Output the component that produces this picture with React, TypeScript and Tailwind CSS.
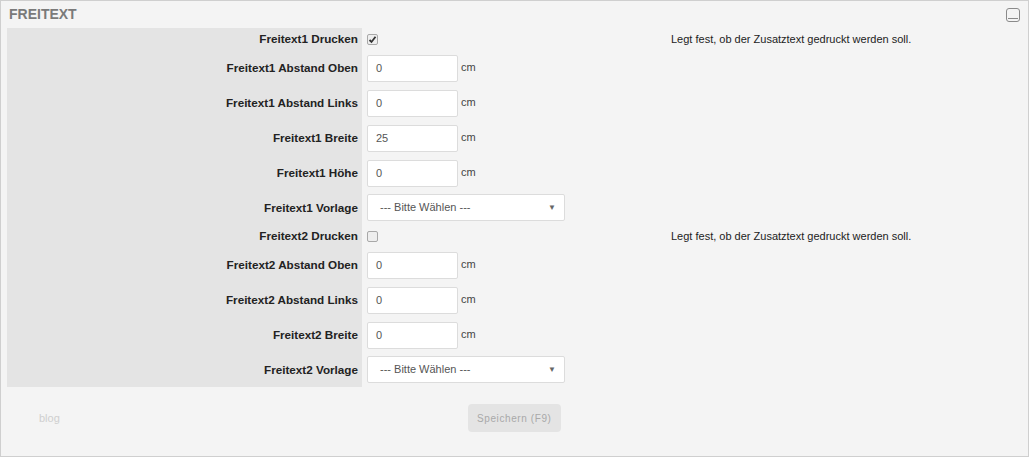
import React from 'react';

type Row =
  | { kind: 'check'; label: string; checked: boolean }
  | { kind: 'input'; label: string; value: string }
  | { kind: 'select'; label: string };

const rows: Row[] = [
  { kind: 'check', label: 'Freitext1 Drucken', checked: true },
  { kind: 'input', label: 'Freitext1 Abstand Oben', value: '0' },
  { kind: 'input', label: 'Freitext1 Abstand Links', value: '0' },
  { kind: 'input', label: 'Freitext1 Breite', value: '25' },
  { kind: 'input', label: 'Freitext1 Höhe', value: '0' },
  { kind: 'select', label: 'Freitext1 Vorlage' },
  { kind: 'check', label: 'Freitext2 Drucken', checked: false },
  { kind: 'input', label: 'Freitext2 Abstand Oben', value: '0' },
  { kind: 'input', label: 'Freitext2 Abstand Links', value: '0' },
  { kind: 'input', label: 'Freitext2 Breite', value: '0' },
  { kind: 'select', label: 'Freitext2 Vorlage' },
];

const Check = ({ checked }: { checked: boolean }) => (
  <span className="w-[11px] h-[11px] border border-[#a8a8a8] rounded-[2px] bg-[#eee] flex items-center justify-center">
    {checked && (
      <svg width="9" height="9" viewBox="0 0 9 9">
        <path d="M1.5 5 L3.5 7 L7.5 1.8" stroke="#333" strokeWidth="1.8" fill="none" />
      </svg>
    )}
  </span>
);

const App = () => {
  return (
    <div className="w-[1029px] h-[457px] bg-[#f4f4f4] border border-[#cfcfcf] font-['Liberation_Sans',Arial,sans-serif] text-[11px] text-[#333] flex flex-col">
      {/* Header */}
      <div className="h-[27px] flex items-center justify-between pl-[8px] pr-[8px]">
        <span className="text-[14px] font-bold text-[#7a7a7a]">FREITEXT</span>
        <span className="w-[14px] h-[14px] border border-[#8a8a8a] rounded-[3px] flex flex-col justify-end pb-[2px] px-[1px]">
          <span className="h-[1px] bg-[#8a8a8a]" />
        </span>
      </div>

      {/* Form */}
      <div className="pl-[6px]">
        {rows.map((r, i) => (
          <div key={i} className={`flex ${r.kind === 'check' ? 'h-[22px]' : 'h-[35px]'}`}>
            <div className="w-[355px] bg-[#e4e4e4] flex items-center justify-end pr-[4px] font-bold text-[11.7px] text-[#222]">
              {r.label}
            </div>
            <div className="flex-1 flex items-center pl-[5px]">
              {r.kind === 'check' && (
                <>
                  <Check checked={r.checked} />
                  <span className="ml-[293px] text-[#222]">Legt fest, ob der Zusatztext gedruckt werden soll.</span>
                </>
              )}
              {r.kind === 'input' && (
                <>
                  <div className="w-[91px] h-[27px] mt-[2px] bg-white border border-[#dcdcdc] rounded-[2px] flex items-center pl-[8px] text-[#555]">
                    {r.value}
                  </div>
                  <span className="ml-[3px] text-[#444]">cm</span>
                </>
              )}
              {r.kind === 'select' && (
                <div className="w-[198px] h-[27px] bg-white border border-[#dcdcdc] rounded-[2px] flex items-center justify-between pl-[12px] pr-[8px] text-[#555]">
                  <span>--- Bitte Wählen ---</span>
                  <span className="text-[8px] text-[#666]">▼</span>
                </div>
              )}
            </div>
          </div>
        ))}
      </div>

      {/* Footer */}
      <div className="flex items-start pt-[17px]">
        <span className="ml-[38px] mt-[6px] text-[#cfcfcf] text-[11px]">blog</span>
        <button className="ml-[408px] w-[93px] h-[28px] bg-[#e4e4e4] rounded-[4px] text-[10px] tracking-[0.6px] text-[#a9a9a9]">
          Speichern (F9)
        </button>
      </div>
    </div>
  );
};

export default App;
